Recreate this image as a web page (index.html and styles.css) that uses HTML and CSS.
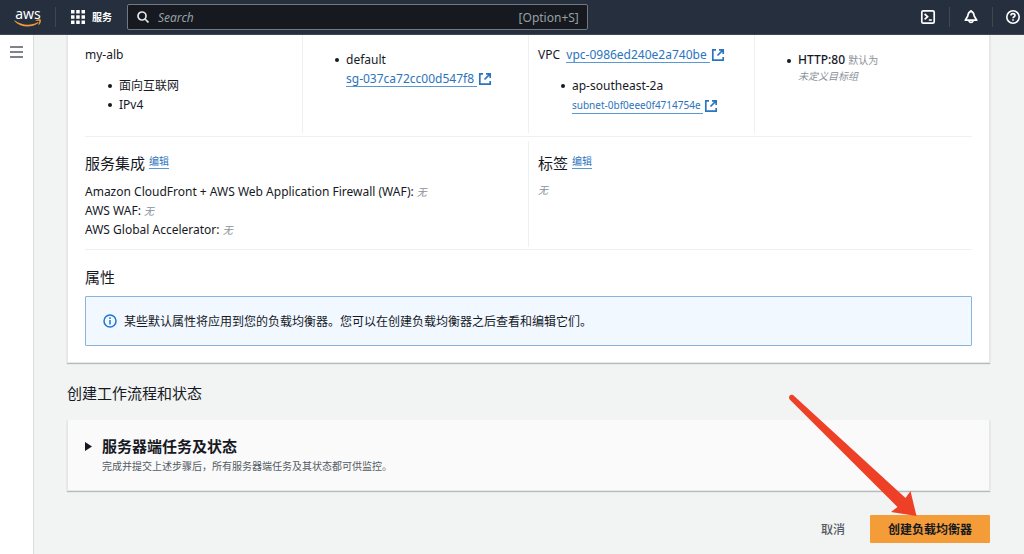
FILE: index.html
```html
<!DOCTYPE html>
<html lang="zh-CN">
<head>
<meta charset="utf-8">
<meta name="viewport" content="width=device-width, initial-scale=1">
<title>创建应用程序负载均衡器</title>
<link rel="stylesheet" href="styles.css">
</head>
<body>
<svg class="defs" width="0" height="0" aria-hidden="true">
  <symbol id="external" viewBox="0 0 14 14">
    <path d="M5 1.800H1.800v10.400h10.400V9M8 1.800h4.200V6M11.800 2.200L6.500 7.500" fill="none" stroke="currentColor" stroke-width="1.700"/>
  </symbol>
</svg>
<header class="topbar">
  <a class="logo" href="#" aria-label="aws">
    <span class="logo-text">aws</span>
    <svg class="smile" width="28" height="8" viewBox="0 0 28 8" aria-hidden="true">
      <path d="M0.500 1.300C8 6.800 17 7 24 3l.6.900C17 9.300 6.500 8.500.300 1.900z" fill="#f29b34"/>
      <path d="M21.500 1.400c2-1.300 4.600-1.300 5.300-.600.500 1-.2 3.800-1.900 5.200l-.5-.3c.5-1.200 1.200-3 .8-3.600-.5-.600-2.400-.400-3.500-.200z" fill="#f29b34"/>
    </svg>
  </a>
  <button class="services" type="button">
    <svg width="14" height="14" viewBox="0 0 14 14" fill="#fff" aria-hidden="true">
      <path d="M0 0h3.500v3.500H0zM5.200 0h3.500v3.500H5.200zM10.500 0H14v3.500h-3.500zM0 5.200h3.500v3.500H0zM5.200 5.200h3.500v3.500H5.200zM10.500 5.200H14v3.500h-3.500zM0 10.500h3.500V14H0zM5.200 10.500h3.500V14H5.200zM10.500 10.500H14V14h-3.500z"/>
    </svg>
    <span>服务</span>
  </button>
  <label class="search">
    <svg width="12" height="12" viewBox="0 0 12 12" fill="none" stroke="#e3e5e7" stroke-width="1.700" aria-hidden="true">
      <circle cx="5" cy="5" r="4"/><path d="M8 8l3.500 3.500"/>
    </svg>
    <input type="search" placeholder="Search" aria-label="Search">
    <span class="shortcut">[Option+S]</span>
  </label>
  <nav class="tools" aria-label="工具">
    <button type="button" aria-label="CloudShell">
      <svg width="16" height="16" viewBox="0 0 16 16" fill="none" stroke="#fff" stroke-width="1.700"><rect x="1.800" y="1.800" width="12.400" height="12.400" rx="1.500"/><path d="M4.600 5l3 2.700-3 2.700M8.800 11h3"/></svg>
    </button>
    <button type="button" aria-label="通知">
      <svg width="16" height="16" viewBox="0 0 16 16" fill="none" stroke="#fff" stroke-width="1.700" stroke-linejoin="round"><path d="M8 2.300C5.500 2.800 5 5 4.800 7L2.300 11.200h11.400L11.200 7C11 5 10.500 2.800 8 2.300zM6 11.500c.3 2.600 3.700 2.600 4 0M8 1v2"/></svg>
    </button>
    <button type="button" aria-label="帮助">
      <svg width="16" height="16" viewBox="0 0 16 16" fill="none" stroke="#fff" stroke-width="1.600"><circle cx="8" cy="8" r="6.200"/><path d="M6 6.500c0-2.500 4-2.500 4 0C10 7.700 8 7.800 8 9.300M8 10.300v1.500"/></svg>
    </button>
  </nav>
</header>
<div class="layout">
  <aside class="rail">
    <button type="button" aria-label="打开导航">
      <svg width="13" height="12" viewBox="0 0 13 12" stroke="#545b64" stroke-width="1.500" aria-hidden="true"><path d="M0 1h13M0 6h13M0 11h13"/></svg>
    </button>
  </aside>
  <main class="main">
    <section class="card summary">
      <div class="row basics">
        <div class="cell">
          <p>my-alb</p>
          <ul class="list spaced"><li>面向互联网</li><li>IPv4</li></ul>
        </div>
        <div class="cell">
          <ul class="list lowered"><li>default<br><a class="link" href="#"><span>sg-037ca72cc00d547f8&nbsp;</span><svg><use href="#external"/></svg></a></li></ul>
        </div>
        <div class="cell">
          <p>VPC&nbsp; <a class="link" href="#"><span>vpc-0986ed240e2a740be&nbsp;</span><svg><use href="#external"/></svg></a></p>
          <ul class="list spaced"><li>ap-southeast-2a<br><a class="link small" href="#"><span>subnet-0bf0eee0f4714754e&nbsp;</span><svg><use href="#external"/></svg></a></li></ul>
        </div>
        <div class="cell">
          <ul class="list lowered tight"><li><span class="strong">HTTP:80</span> <span class="muted">默认为</span><br><em class="muted">未定义目标组</em></li></ul>
        </div>
      </div>
      <div class="row details">
        <div class="cell">
          <h2>服务集成 <a class="edit" href="#">编辑</a></h2>
          <p>Amazon CloudFront + AWS Web Application Firewall (WAF): <em class="muted">无</em></p>
          <p>AWS WAF: <em class="muted">无</em></p>
          <p>AWS Global Accelerator: <em class="muted">无</em></p>
        </div>
        <div class="cell">
          <h2>标签 <a class="edit" href="#">编辑</a></h2>
          <p class="empty"><em>无</em></p>
        </div>
      </div>
      <div class="attributes">
        <h2>属性</h2>
        <div class="alert">
          <svg width="14" height="14" viewBox="0 0 14 14" fill="none" stroke="#2074d5" stroke-width="1.500" aria-hidden="true"><circle cx="7" cy="7" r="6"/><path d="M7 3.300v1.600M7 6v4.500"/></svg>
          <p>某些默认属性将应用到您的负载均衡器。您可以在创建负载均衡器之后查看和编辑它们。</p>
        </div>
      </div>
    </section>
    <h2 class="section-title">创建工作流程和状态</h2>
    <section class="card tasks">
      <button class="expander" type="button" aria-expanded="false">
        <svg width="7" height="9" viewBox="0 0 7 9" fill="#16191f" aria-hidden="true"><path d="M0 0l7 4.500L0 9z"/></svg>
        <span class="tasks-title">服务器端任务及状态</span>
      </button>
      <p class="tasks-note">完成并提交上述步骤后，所有服务器端任务及其状态都可供监控。</p>
    </section>
    <div class="actions">
      <button class="cancel" type="button">取消</button>
      <div class="create-wrap">
        <button class="create" type="button">创建负载均衡器</button>
        <svg class="arrow" width="130" height="124" viewBox="0 0 130 124" aria-hidden="true">
          <path d="M4.300 2.300C1.500.600-1.300 3.700.7 6.400L108.500 114l-6.500 5L127.500 123l-6-25-5 7z" fill="#ee4027"/>
        </svg>
      </div>
    </div>
  </main>
</div>
</body>
</html>
```
FILE: styles.css
```css
* { box-sizing: border-box; }
body {
  margin: 0;
  min-height: 100vh;
  display: flex;
  flex-direction: column;
  background: #f2f3f3;
  color: #16191f;
  font: 12px/19px "Noto Sans", "Noto Sans CJK SC", sans-serif;
}
button, input { font: inherit; color: inherit; }
button { border: 0; padding: 0; background: none; cursor: pointer; }
p, h2, ul { margin: 0; padding: 0; }
svg { flex: none; }
.defs { position: absolute; }

.topbar {
  display: flex;
  align-items: center;
  height: 35px;
  padding-left: 14px;
  background: #252f3e;
  border-bottom: 1px solid #414750;
  color: #fff;
}
.logo {
  display: flex;
  flex-direction: column;
  align-items: center;
  width: 28px;
  color: #fff;
  text-decoration: none;
}
.logo-text { font-size: 14px; line-height: 11px; }
.services {
  display: flex;
  align-items: center;
  gap: 7px;
  height: 20px;
  margin: 0 15px 0 13px;
  padding-left: 15px;
  border-left: 1px solid #414750;
  font-size: 10px;
  font-weight: 700;
}
.search {
  display: flex;
  align-items: center;
  gap: 9px;
  width: 45vw;
  height: 26px;
  padding: 0 8px 0 9px;
  background: #161a20;
  border: 1px solid #717a7e;
  border-radius: 2px;
}
.search input {
  flex: 1;
  min-width: 0;
  padding: 0;
  border: 0;
  outline: 0;
  background: none;
}
.search input::placeholder { color: #95a0a2; font-style: italic; opacity: 1; }
.shortcut { color: #95a0a2; font-size: 12px; }
.tools { display: flex; margin-left: auto; }
.tools button {
  display: flex;
  align-items: center;
  justify-content: center;
  width: 43px;
  height: 20px;
}
.tools button + button { border-left: 1px solid #414750; }
.tools button:last-child { width: 32px; justify-content: flex-end; padding-right: 3px; }

.layout { display: flex; flex: 1; }
.rail {
  width: 34px;
  padding: 11px 0 0 10px;
  background: #fff;
  border-right: 1px solid #d9dcdc;
}
.rail button { display: flex; }
.main { flex: 1; min-width: 0; padding: 0 34px 11px 33px; }

.card {
  background: #fff;
  border: 1px solid #e4e7e7;
  border-top: 0;
  box-shadow: 0 1px 1px #b6bbbd;
}
.summary { padding: 0 17px 16px; }
.row {
  display: grid;
  border-bottom: 1px solid #eff0f0;
}
.basics { grid-template-columns: 217fr 226fr 226fr 218fr; min-height: 102px; padding-bottom: 3px; }
.details { grid-template-columns: 443fr 444fr; padding: 4px 0 2px; min-height: 113px; }
.cell { min-width: 0; padding: 10px 0 0 9px; }
.cell:first-child { padding-left: 0; }
.cell + .cell { border-left: 1px solid #eff0f0; }
.list { padding-left: 34px; list-style: none; }
.list li { position: relative; }
.list li::before {
  content: "";
  position: absolute;
  left: -11px;
  top: 8px;
  width: 4px;
  height: 4px;
  border-radius: 50%;
  background: #16191f;
}
.spaced { margin-top: 12px; }
.lowered { margin-top: 5px; }
.tight { margin-top: 7px; line-height: 16px; }
.tight li::before { top: 7px; }
.strong { font-weight: 500; }
.muted { color: #8a9097; font-size: 10px; line-height: 12px; }
.empty { color: #8a9097; font-size: 10px; line-height: 16px; }
.link {
  display: inline-flex;
  align-items: center;
  gap: 1px;
  color: #2b74be;
  text-decoration: none;
}
.link span { line-height: 15px; border-bottom: 1px solid #5a98d3; }
.link svg { width: 14px; height: 14px; }
.small { font-size: 10px; }
h2 { font-size: 15px; font-weight: 400; line-height: 24px; }
.details h2 { margin-bottom: 7px; }
.details .cell { padding-top: 10px; }
.edit {
  color: #2b74be;
  font-size: 10px;
  text-decoration: none;
  border-bottom: 1px solid #5a98d3;
  vertical-align: 4px;
  line-height: 12px;
}
.attributes { padding-top: 15px; }
.alert {
  display: flex;
  align-items: center;
  gap: 7px;
  min-height: 50px;
  margin-top: 7px;
  padding: 0 17px;
  background: #f1f8ff;
  border: 1px solid #8ab4dd;
  border-radius: 1px;
}
.section-title { margin: 18px 0 15px; }
.tasks { padding: 14px 17px 16px; background: #fafafa; }
.expander { display: flex; align-items: center; gap: 10px; }
.tasks-title { font-size: 15px; font-weight: 700; line-height: 24px; }
.tasks-note { padding-left: 17px; color: #545b64; font-size: 10px; line-height: 16px; }
.actions {
  display: flex;
  justify-content: flex-end;
  align-items: center;
  gap: 25px;
  margin-top: 24px;
}
.cancel { color: #545b64; font-weight: 500; }
.create-wrap { position: relative; }
.create {
  height: 28px;
  padding: 0 18px;
  background: #f39c38;
  border-radius: 1px;
  font-weight: 700;
}
.arrow { position: absolute; right: 71px; bottom: 26px; pointer-events: none; }
```
